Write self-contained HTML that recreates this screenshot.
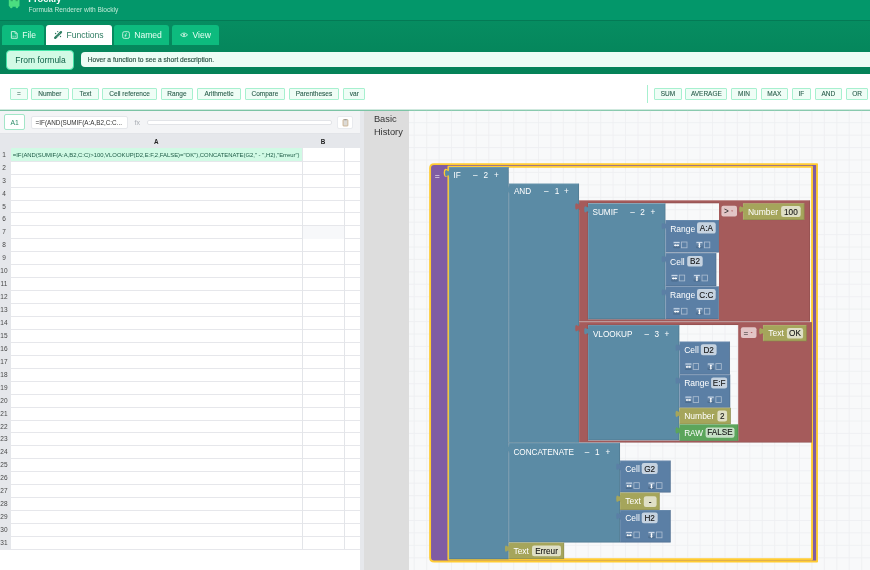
<!DOCTYPE html><html><head><meta charset="utf-8"><style>
*{box-sizing:border-box}
html,body{margin:0;padding:0}
body{width:870px;height:570px;overflow:hidden;position:relative;background:#fff;font-family:"Liberation Sans", sans-serif}
.a{position:absolute;white-space:nowrap}
.tab{position:absolute;top:24.6px;height:20.6px;background:#0dbb7e;border-radius:3px 3px 0 0;color:#e8fff4;font-size:8.6px;line-height:20.6px}
.btn{position:absolute;top:88.2px;height:11.6px;border:1px solid #a7f0cf;background:#effdf6;color:#2a5e4c;font-size:6.5px;line-height:10.9px;-webkit-text-stroke:0.1px #2a5e4c;text-align:center;border-radius:1px}
.rn{position:absolute;left:0;width:7.9px;height:13px;text-align:center;font-size:6.5px;color:#484848;}
</style></head><body><div id="root" style="position:absolute;left:0;top:0;width:870px;height:570px;overflow:hidden;will-change:transform">
<div class="a" style="left:0;top:0;width:870px;height:20px;background:#03976a"></div>
<div class="a" style="left:0;top:19.6px;width:870px;height:1.2px;background:#047a55"></div>
<div class="a" style="left:0;top:20.8px;width:870px;height:53px;background:linear-gradient(#068d61,#048258)"></div>
<svg class="a" style="left:0;top:0" width="30" height="12"><path d="M8.8,-2 H19.5 V5.6 Q19.5,6.8 18.3,6.8 H10 Q8.8,6.8 8.8,5.6 Z" fill="#4ade80"/><circle cx="11.3" cy="7" r="1.3" fill="#4ade80"/><circle cx="16.9" cy="7" r="1.3" fill="#4ade80"/><rect x="10.6" y="0" width="2.2" height="1.2" fill="#2fa866"/><rect x="15.6" y="0" width="2.2" height="1.2" fill="#2fa866"/></svg>
<div class="a" style="left:28.3px;top:-5.3px;font-size:9.3px;font-weight:bold;color:#fff;line-height:9.3px">Frockly</div>
<div class="a" style="left:28.6px;top:5.8px;font-size:6.6px;color:#bfe9d6;line-height:8px">Formula Renderer with Blockly</div>
<div class="tab" style="left:1.8px;width:42.400000000000006px;background:#0dbb7e;color:#e6fff3"></div>
<div class="tab" style="left:46.1px;width:65.6px;background:#ffffff;color:#2e7d62"></div>
<div class="tab" style="left:113.8px;width:55.7px;background:#0dbb7e;color:#e6fff3"></div>
<div class="tab" style="left:171.7px;width:47.10000000000002px;background:#0dbb7e;color:#e6fff3"></div>
<svg class="a" style="left:0;top:24px" width="220" height="22" viewBox="0 24 220 22"><path d="M11.4,31.6 H15.3 L17.2,33.5 V38.3 H11.4 Z" fill="none" stroke="#c9f3df" stroke-width="0.95" stroke-linejoin="round"/><path d="M15.1,31.7 V33.7 H17.1" fill="none" stroke="#c9f3df" stroke-width="0.8"/><path d="M13.1,35.6 v1.6 M15.2,35.6 v1.6" stroke="#c9f3df" stroke-width="0.8"/><path d="M55.2,37.9 L61.0,32.1" stroke="#2e7d62" stroke-width="2.3" stroke-linecap="round"/><path d="M56.3,35.6 l1.2,1.2 M57.6,34.3 l1.2,1.2 M58.9,33.0 l1.2,1.2" stroke="#ffffff" stroke-width="0.45" opacity="0.75"/><circle cx="57.7" cy="31.6" r="0.65" fill="#2e7d62"/><circle cx="55.6" cy="33.5" r="0.7" fill="#2e7d62"/><circle cx="60.5" cy="36.5" r="0.7" fill="#2e7d62"/><rect x="122.7" y="31.7" width="6.7" height="6.7" rx="1.6" fill="none" stroke="#c4f0dc" stroke-width="0.95"/><path d="M126.9,33.6 Q125.9,33.4 125.7,34.6 L125.1,37.2 M124.6,35.3 H126.6" fill="none" stroke="#c4f0dc" stroke-width="0.8"/><path d="M180.5,34.85 Q184.05,31.2 187.6,34.85 Q184.05,38.5 180.5,34.85 Z" fill="none" stroke="#c4f0dc" stroke-width="0.95"/><circle cx="184.05" cy="34.85" r="1.1" fill="#c4f0dc"/></svg>
<div class="a" style="left:22.2px;top:26.5px;font-size:8.6px;line-height:16px;color:#e6fff3">File</div>
<div class="a" style="left:66.4px;top:26.5px;font-size:8.6px;line-height:16px;color:#2e7d62">Functions</div>
<div class="a" style="left:134.2px;top:26.5px;font-size:8.6px;line-height:16px;color:#e6fff3">Named</div>
<div class="a" style="left:192.5px;top:26.5px;font-size:8.6px;line-height:16px;color:#e6fff3">View</div>
<div class="a" style="left:6.2px;top:50.2px;width:68px;height:19.6px;background:#d1fae5;border:1.5px solid #45e3a8;border-radius:4px"></div>
<div class="a" style="left:15.2px;top:53.5px;font-size:8.5px;line-height:12px;color:#0b5e45">From formula</div>
<div class="a" style="left:81.1px;top:51.9px;width:800px;height:15.2px;background:#ecfdf5;border-radius:4px"></div>
<div class="a" style="left:87.8px;top:55.3px;font-size:6.65px;line-height:9px;color:#2a5244;-webkit-text-stroke:0.15px #2a5244">Hover a function to see a short description.</div>
<div class="btn" style="left:9.9px;width:17.9px">=</div>
<div class="btn" style="left:31.2px;width:37.39999999999999px">Number</div>
<div class="btn" style="left:72.2px;width:26.39999999999999px">Text</div>
<div class="btn" style="left:102.4px;width:54.400000000000006px">Cell reference</div>
<div class="btn" style="left:161.2px;width:31.5px">Range</div>
<div class="btn" style="left:197.2px;width:43.5px">Arithmetic</div>
<div class="btn" style="left:245px;width:39.80000000000001px">Compare</div>
<div class="btn" style="left:289.3px;width:49.30000000000001px">Parentheses</div>
<div class="btn" style="left:343.1px;width:22.399999999999977px">var</div>
<div class="btn" style="left:654.2px;width:27.399999999999977px">SUM</div>
<div class="btn" style="left:685.3px;width:42.200000000000045px">AVERAGE</div>
<div class="btn" style="left:731.3px;width:25.5px">MIN</div>
<div class="btn" style="left:760.8px;width:27.200000000000045px">MAX</div>
<div class="btn" style="left:792px;width:18.700000000000045px">IF</div>
<div class="btn" style="left:815.1px;width:26.600000000000023px">AND</div>
<div class="btn" style="left:845.9px;width:22.300000000000068px">OR</div>
<div class="a" style="left:647px;top:84.5px;width:1.2px;height:18.5px;background:#a7f0cf"></div>
<div class="a" style="left:0;top:109px;width:870px;height:1px;background:#cfe9de"></div>
<div class="a" style="left:0;top:110px;width:870px;height:1px;background:#7cc3a5"></div>
<div class="a" style="left:0;top:110.9px;width:359.6px;height:23.1px;background:#f3f4f6;border-bottom:0.6px solid #e2e4e8"></div>
<div class="a" style="left:3.8px;top:114.3px;width:21.7px;height:16px;background:#fff;border:1.1px solid #a3e6c8;border-radius:2px"></div>
<div class="a" style="left:10.4px;top:117.5px;font-size:6.8px;line-height:10px;color:#2b8a68">A1</div>
<div class="a" style="left:31px;top:115.5px;width:97.4px;height:13.5px;background:#fff;border:0.7px solid #e5e7eb;border-radius:2px"></div>
<div class="a" style="left:35.6px;top:118px;font-size:6.34px;line-height:9px;color:#333">=IF(AND(SUMIF(A:A,B2,C:C...</div>
<div class="a" style="left:134.6px;top:117.8px;font-size:7px;line-height:9px;color:#a8acb3">fx</div>
<div class="a" style="left:146.5px;top:120px;width:185px;height:4.8px;background:#fff;border:0.7px solid #e2e4e8;border-radius:2px"></div>
<div class="a" style="left:337.2px;top:115.6px;width:16.2px;height:13.8px;background:#fff;border:0.7px solid #e8eaee;border-radius:2px"></div>
<svg class="a" style="left:340px;top:117px" width="10" height="11" viewBox="340 117 10 11"><rect x="343.0" y="119.6" width="4.9" height="6.4" rx="0.6" fill="#dcdad6" stroke="#c4a77f" stroke-width="0.75"/><rect x="344.3" y="119.0" width="2.3" height="1.2" rx="0.3" fill="#9a9a9a"/></svg>
<div class="a" style="left:0;top:134px;width:359.6px;height:14.4px;background:#e5e7eb"></div>
<div class="a" style="left:154px;top:138.2px;font-size:6.3px;font-weight:bold;line-height:8px;color:#222">A</div>
<div class="a" style="left:320.8px;top:138.2px;font-size:6.3px;font-weight:bold;line-height:8px;color:#222">B</div>
<div class="a" style="left:11px;top:148.4px;width:348.6px;height:401px;background:#fff"></div>
<div class="a" style="left:0;top:148.4px;width:11px;height:401px;background:#e5e7eb"></div>
<div class="a" style="left:0;top:160.74px;width:359.6px;height:1px;background:#e6e7eb"></div>
<div class="rn" style="top:148.80px;line-height:12.94px">1</div>
<div class="a" style="left:0;top:173.68px;width:359.6px;height:1px;background:#e6e7eb"></div>
<div class="rn" style="top:161.74px;line-height:12.94px">2</div>
<div class="a" style="left:0;top:186.62px;width:359.6px;height:1px;background:#e6e7eb"></div>
<div class="rn" style="top:174.68px;line-height:12.94px">3</div>
<div class="a" style="left:0;top:199.55px;width:359.6px;height:1px;background:#e6e7eb"></div>
<div class="rn" style="top:187.62px;line-height:12.94px">4</div>
<div class="a" style="left:0;top:212.49px;width:359.6px;height:1px;background:#e6e7eb"></div>
<div class="rn" style="top:200.55px;line-height:12.94px">5</div>
<div class="a" style="left:0;top:225.43px;width:359.6px;height:1px;background:#e6e7eb"></div>
<div class="rn" style="top:213.49px;line-height:12.94px">6</div>
<div class="a" style="left:0;top:238.37px;width:359.6px;height:1px;background:#e6e7eb"></div>
<div class="rn" style="top:226.43px;line-height:12.94px">7</div>
<div class="a" style="left:0;top:251.31px;width:359.6px;height:1px;background:#e6e7eb"></div>
<div class="rn" style="top:239.37px;line-height:12.94px">8</div>
<div class="a" style="left:0;top:264.25px;width:359.6px;height:1px;background:#e6e7eb"></div>
<div class="rn" style="top:252.31px;line-height:12.94px">9</div>
<div class="a" style="left:0;top:277.19px;width:359.6px;height:1px;background:#e6e7eb"></div>
<div class="rn" style="top:265.25px;line-height:12.94px">10</div>
<div class="a" style="left:0;top:290.13px;width:359.6px;height:1px;background:#e6e7eb"></div>
<div class="rn" style="top:278.19px;line-height:12.94px">11</div>
<div class="a" style="left:0;top:303.06px;width:359.6px;height:1px;background:#e6e7eb"></div>
<div class="rn" style="top:291.13px;line-height:12.94px">12</div>
<div class="a" style="left:0;top:316.00px;width:359.6px;height:1px;background:#e6e7eb"></div>
<div class="rn" style="top:304.06px;line-height:12.94px">13</div>
<div class="a" style="left:0;top:328.94px;width:359.6px;height:1px;background:#e6e7eb"></div>
<div class="rn" style="top:317.00px;line-height:12.94px">14</div>
<div class="a" style="left:0;top:341.88px;width:359.6px;height:1px;background:#e6e7eb"></div>
<div class="rn" style="top:329.94px;line-height:12.94px">15</div>
<div class="a" style="left:0;top:354.82px;width:359.6px;height:1px;background:#e6e7eb"></div>
<div class="rn" style="top:342.88px;line-height:12.94px">16</div>
<div class="a" style="left:0;top:367.76px;width:359.6px;height:1px;background:#e6e7eb"></div>
<div class="rn" style="top:355.82px;line-height:12.94px">17</div>
<div class="a" style="left:0;top:380.70px;width:359.6px;height:1px;background:#e6e7eb"></div>
<div class="rn" style="top:368.76px;line-height:12.94px">18</div>
<div class="a" style="left:0;top:393.64px;width:359.6px;height:1px;background:#e6e7eb"></div>
<div class="rn" style="top:381.70px;line-height:12.94px">19</div>
<div class="a" style="left:0;top:406.57px;width:359.6px;height:1px;background:#e6e7eb"></div>
<div class="rn" style="top:394.64px;line-height:12.94px">20</div>
<div class="a" style="left:0;top:419.51px;width:359.6px;height:1px;background:#e6e7eb"></div>
<div class="rn" style="top:407.57px;line-height:12.94px">21</div>
<div class="a" style="left:0;top:432.45px;width:359.6px;height:1px;background:#e6e7eb"></div>
<div class="rn" style="top:420.51px;line-height:12.94px">22</div>
<div class="a" style="left:0;top:445.39px;width:359.6px;height:1px;background:#e6e7eb"></div>
<div class="rn" style="top:433.45px;line-height:12.94px">23</div>
<div class="a" style="left:0;top:458.33px;width:359.6px;height:1px;background:#e6e7eb"></div>
<div class="rn" style="top:446.39px;line-height:12.94px">24</div>
<div class="a" style="left:0;top:471.27px;width:359.6px;height:1px;background:#e6e7eb"></div>
<div class="rn" style="top:459.33px;line-height:12.94px">25</div>
<div class="a" style="left:0;top:484.21px;width:359.6px;height:1px;background:#e6e7eb"></div>
<div class="rn" style="top:472.27px;line-height:12.94px">26</div>
<div class="a" style="left:0;top:497.15px;width:359.6px;height:1px;background:#e6e7eb"></div>
<div class="rn" style="top:485.21px;line-height:12.94px">27</div>
<div class="a" style="left:0;top:510.08px;width:359.6px;height:1px;background:#e6e7eb"></div>
<div class="rn" style="top:498.15px;line-height:12.94px">28</div>
<div class="a" style="left:0;top:523.02px;width:359.6px;height:1px;background:#e6e7eb"></div>
<div class="rn" style="top:511.08px;line-height:12.94px">29</div>
<div class="a" style="left:0;top:535.96px;width:359.6px;height:1px;background:#e6e7eb"></div>
<div class="rn" style="top:524.02px;line-height:12.94px">30</div>
<div class="a" style="left:0;top:548.90px;width:359.6px;height:1px;background:#e6e7eb"></div>
<div class="rn" style="top:536.96px;line-height:12.94px">31</div>
<div class="a" style="left:302.8px;top:226.03px;width:41.6px;height:12.94px;background:#f7f8fa"></div>
<div class="a" style="left:11px;top:148.4px;width:291.3px;height:12.34px;background:#d1fae5"></div>
<div class="a" style="left:12.8px;top:152px;font-size:5.9px;line-height:7px;color:#1c5a45">=IF(AND(SUMIF(A:A,B2,C:C)&gt;100,VLOOKUP(D2,E:F,2,FALSE)="OK"),CONCATENATE(G2," - ",H2),"Erreur")</div>
<div class="a" style="left:302.3px;top:148.4px;width:0.8px;height:401px;background:#e3e5e9"></div>
<div class="a" style="left:344.4px;top:148.4px;width:0.8px;height:401px;background:#e3e5e9"></div>
<div class="a" style="left:359.6px;top:110.9px;width:4.6px;height:460px;background:#e6e8ec"></div>
<div class="a" style="left:364.2px;top:110.9px;width:44.8px;height:460px;background:#dddddd"></div>
<div class="a" style="left:373.9px;top:114.1px;font-size:9.3px;line-height:10px;color:#333">Basic</div>
<div class="a" style="left:373.9px;top:127.3px;font-size:9.3px;line-height:10px;color:#333">History</div>
<svg class="a" style="left:0;top:0" width="870" height="570" viewBox="0 0 870 570"><defs><linearGradient id="icg" x1="0" y1="0" x2="0" y2="1"><stop offset="0" stop-color="#7e9cbd"/><stop offset="1" stop-color="#48698b"/></linearGradient></defs>
<rect x="409" y="110.9" width="461" height="460" fill="#f8f9fa"/>
<line x1="414.20" y1="110.9" x2="414.20" y2="570" stroke="#eeeff2" stroke-width="0.9"/>
<line x1="426.63" y1="110.9" x2="426.63" y2="570" stroke="#eeeff2" stroke-width="0.9"/>
<line x1="439.06" y1="110.9" x2="439.06" y2="570" stroke="#eeeff2" stroke-width="0.9"/>
<line x1="451.49" y1="110.9" x2="451.49" y2="570" stroke="#eeeff2" stroke-width="0.9"/>
<line x1="463.92" y1="110.9" x2="463.92" y2="570" stroke="#eeeff2" stroke-width="0.9"/>
<line x1="476.35" y1="110.9" x2="476.35" y2="570" stroke="#eeeff2" stroke-width="0.9"/>
<line x1="488.78" y1="110.9" x2="488.78" y2="570" stroke="#eeeff2" stroke-width="0.9"/>
<line x1="501.21" y1="110.9" x2="501.21" y2="570" stroke="#eeeff2" stroke-width="0.9"/>
<line x1="513.64" y1="110.9" x2="513.64" y2="570" stroke="#eeeff2" stroke-width="0.9"/>
<line x1="526.07" y1="110.9" x2="526.07" y2="570" stroke="#eeeff2" stroke-width="0.9"/>
<line x1="538.50" y1="110.9" x2="538.50" y2="570" stroke="#eeeff2" stroke-width="0.9"/>
<line x1="550.93" y1="110.9" x2="550.93" y2="570" stroke="#eeeff2" stroke-width="0.9"/>
<line x1="563.36" y1="110.9" x2="563.36" y2="570" stroke="#eeeff2" stroke-width="0.9"/>
<line x1="575.79" y1="110.9" x2="575.79" y2="570" stroke="#eeeff2" stroke-width="0.9"/>
<line x1="588.22" y1="110.9" x2="588.22" y2="570" stroke="#eeeff2" stroke-width="0.9"/>
<line x1="600.65" y1="110.9" x2="600.65" y2="570" stroke="#eeeff2" stroke-width="0.9"/>
<line x1="613.08" y1="110.9" x2="613.08" y2="570" stroke="#eeeff2" stroke-width="0.9"/>
<line x1="625.51" y1="110.9" x2="625.51" y2="570" stroke="#eeeff2" stroke-width="0.9"/>
<line x1="637.94" y1="110.9" x2="637.94" y2="570" stroke="#eeeff2" stroke-width="0.9"/>
<line x1="650.37" y1="110.9" x2="650.37" y2="570" stroke="#eeeff2" stroke-width="0.9"/>
<line x1="662.80" y1="110.9" x2="662.80" y2="570" stroke="#eeeff2" stroke-width="0.9"/>
<line x1="675.23" y1="110.9" x2="675.23" y2="570" stroke="#eeeff2" stroke-width="0.9"/>
<line x1="687.66" y1="110.9" x2="687.66" y2="570" stroke="#eeeff2" stroke-width="0.9"/>
<line x1="700.09" y1="110.9" x2="700.09" y2="570" stroke="#eeeff2" stroke-width="0.9"/>
<line x1="712.52" y1="110.9" x2="712.52" y2="570" stroke="#eeeff2" stroke-width="0.9"/>
<line x1="724.95" y1="110.9" x2="724.95" y2="570" stroke="#eeeff2" stroke-width="0.9"/>
<line x1="737.38" y1="110.9" x2="737.38" y2="570" stroke="#eeeff2" stroke-width="0.9"/>
<line x1="749.81" y1="110.9" x2="749.81" y2="570" stroke="#eeeff2" stroke-width="0.9"/>
<line x1="762.24" y1="110.9" x2="762.24" y2="570" stroke="#eeeff2" stroke-width="0.9"/>
<line x1="774.67" y1="110.9" x2="774.67" y2="570" stroke="#eeeff2" stroke-width="0.9"/>
<line x1="787.10" y1="110.9" x2="787.10" y2="570" stroke="#eeeff2" stroke-width="0.9"/>
<line x1="799.53" y1="110.9" x2="799.53" y2="570" stroke="#eeeff2" stroke-width="0.9"/>
<line x1="811.96" y1="110.9" x2="811.96" y2="570" stroke="#eeeff2" stroke-width="0.9"/>
<line x1="824.39" y1="110.9" x2="824.39" y2="570" stroke="#eeeff2" stroke-width="0.9"/>
<line x1="836.82" y1="110.9" x2="836.82" y2="570" stroke="#eeeff2" stroke-width="0.9"/>
<line x1="849.25" y1="110.9" x2="849.25" y2="570" stroke="#eeeff2" stroke-width="0.9"/>
<line x1="861.68" y1="110.9" x2="861.68" y2="570" stroke="#eeeff2" stroke-width="0.9"/>
<line x1="409" y1="122.70" x2="870" y2="122.70" stroke="#eeeff2" stroke-width="0.9"/>
<line x1="409" y1="135.13" x2="870" y2="135.13" stroke="#eeeff2" stroke-width="0.9"/>
<line x1="409" y1="147.56" x2="870" y2="147.56" stroke="#eeeff2" stroke-width="0.9"/>
<line x1="409" y1="159.99" x2="870" y2="159.99" stroke="#eeeff2" stroke-width="0.9"/>
<line x1="409" y1="172.42" x2="870" y2="172.42" stroke="#eeeff2" stroke-width="0.9"/>
<line x1="409" y1="184.85" x2="870" y2="184.85" stroke="#eeeff2" stroke-width="0.9"/>
<line x1="409" y1="197.28" x2="870" y2="197.28" stroke="#eeeff2" stroke-width="0.9"/>
<line x1="409" y1="209.71" x2="870" y2="209.71" stroke="#eeeff2" stroke-width="0.9"/>
<line x1="409" y1="222.14" x2="870" y2="222.14" stroke="#eeeff2" stroke-width="0.9"/>
<line x1="409" y1="234.57" x2="870" y2="234.57" stroke="#eeeff2" stroke-width="0.9"/>
<line x1="409" y1="247.00" x2="870" y2="247.00" stroke="#eeeff2" stroke-width="0.9"/>
<line x1="409" y1="259.43" x2="870" y2="259.43" stroke="#eeeff2" stroke-width="0.9"/>
<line x1="409" y1="271.86" x2="870" y2="271.86" stroke="#eeeff2" stroke-width="0.9"/>
<line x1="409" y1="284.29" x2="870" y2="284.29" stroke="#eeeff2" stroke-width="0.9"/>
<line x1="409" y1="296.72" x2="870" y2="296.72" stroke="#eeeff2" stroke-width="0.9"/>
<line x1="409" y1="309.15" x2="870" y2="309.15" stroke="#eeeff2" stroke-width="0.9"/>
<line x1="409" y1="321.58" x2="870" y2="321.58" stroke="#eeeff2" stroke-width="0.9"/>
<line x1="409" y1="334.01" x2="870" y2="334.01" stroke="#eeeff2" stroke-width="0.9"/>
<line x1="409" y1="346.44" x2="870" y2="346.44" stroke="#eeeff2" stroke-width="0.9"/>
<line x1="409" y1="358.87" x2="870" y2="358.87" stroke="#eeeff2" stroke-width="0.9"/>
<line x1="409" y1="371.30" x2="870" y2="371.30" stroke="#eeeff2" stroke-width="0.9"/>
<line x1="409" y1="383.73" x2="870" y2="383.73" stroke="#eeeff2" stroke-width="0.9"/>
<line x1="409" y1="396.16" x2="870" y2="396.16" stroke="#eeeff2" stroke-width="0.9"/>
<line x1="409" y1="408.59" x2="870" y2="408.59" stroke="#eeeff2" stroke-width="0.9"/>
<line x1="409" y1="421.02" x2="870" y2="421.02" stroke="#eeeff2" stroke-width="0.9"/>
<line x1="409" y1="433.45" x2="870" y2="433.45" stroke="#eeeff2" stroke-width="0.9"/>
<line x1="409" y1="445.88" x2="870" y2="445.88" stroke="#eeeff2" stroke-width="0.9"/>
<line x1="409" y1="458.31" x2="870" y2="458.31" stroke="#eeeff2" stroke-width="0.9"/>
<line x1="409" y1="470.74" x2="870" y2="470.74" stroke="#eeeff2" stroke-width="0.9"/>
<line x1="409" y1="483.17" x2="870" y2="483.17" stroke="#eeeff2" stroke-width="0.9"/>
<line x1="409" y1="495.60" x2="870" y2="495.60" stroke="#eeeff2" stroke-width="0.9"/>
<line x1="409" y1="508.03" x2="870" y2="508.03" stroke="#eeeff2" stroke-width="0.9"/>
<line x1="409" y1="520.46" x2="870" y2="520.46" stroke="#eeeff2" stroke-width="0.9"/>
<line x1="409" y1="532.89" x2="870" y2="532.89" stroke="#eeeff2" stroke-width="0.9"/>
<line x1="409" y1="545.32" x2="870" y2="545.32" stroke="#eeeff2" stroke-width="0.9"/>
<line x1="409" y1="557.75" x2="870" y2="557.75" stroke="#eeeff2" stroke-width="0.9"/>
<path d="M434.1,164.1 H817.05 V561.5 H434.1 Q430.1,561.5 430.1,557.5 V168.1 Q430.1,164.1 434.1,164.1 Z M448.4,166.7 V176.35 c0,-4.7 -3.76,3.76 -3.76,-3.525 s3.76,1.175 3.76,-3.525 Z M448.4,166.7 V559.2 H812.05 V166.7 Z" fill="#805ca3" fill-rule="nonzero" stroke="#ffcc33" stroke-width="1.9" stroke-linejoin="round"/>
<text x="434.80" y="178.60" font-size="8.6" fill="#fff" fill-opacity="1">=</text>
<path d="M448.90,167.10 H508.70 V559.20 H448.90 L448.90,176.75 c0,-4.700 -3.760,3.760 -3.760,-3.525 s3.760,1.175 3.760,-3.525 Z" fill="#5b8ba5" fill-rule="evenodd"/><path d="M449.20,559.20 V176.75 M449.20,169.70 V167.40 H508.70" fill="none" stroke="rgba(255,255,255,0.2)" stroke-width="0.6"/><path d="M448.90,558.90 H508.40 V167.10" fill="none" stroke="rgba(0,0,0,0.18)" stroke-width="0.6"/>
<text x="453.40" y="178.30" font-size="8.2" fill="#fff" fill-opacity="1">IF</text>
<text x="473.10" y="178.30" font-size="8.2" fill="#fff" fill-opacity="1">&#8211;</text>
<text x="483.50" y="178.30" font-size="8.2" fill="#fff" fill-opacity="1">2</text>
<text x="493.90" y="178.30" font-size="8.2" fill="#fff" fill-opacity="1">+</text>
<path d="M508.70,183.50 H579.00 V442.80 H508.70 L508.70,193.15 c0,-4.700 -3.760,3.760 -3.760,-3.525 s3.760,1.175 3.760,-3.525 Z" fill="#5b8ba5" fill-rule="evenodd"/><path d="M509.00,442.80 V193.15 M509.00,186.10 V183.80 H579.00" fill="none" stroke="rgba(255,255,255,0.2)" stroke-width="0.6"/><path d="M508.70,442.50 H578.70 V183.50" fill="none" stroke="rgba(0,0,0,0.18)" stroke-width="0.6"/>
<text x="513.90" y="194.40" font-size="8.2" fill="#fff" fill-opacity="1">AND</text>
<text x="544.00" y="194.40" font-size="8.2" fill="#fff" fill-opacity="1">&#8211;</text>
<text x="554.70" y="194.40" font-size="8.2" fill="#fff" fill-opacity="1">1</text>
<text x="564.00" y="194.40" font-size="8.2" fill="#fff" fill-opacity="1">+</text>
<path d="M579.00,200.30 H810.00 V321.60 H579.00 L579.00,209.95 c0,-4.700 -3.760,3.760 -3.760,-3.525 s3.760,1.175 3.760,-3.525 Z M588.00,203.20 V319.20 H719.00 V203.20 Z" fill="#a55b5b" fill-rule="evenodd"/><path d="M579.30,321.60 V209.95 M579.30,202.90 V200.60 H810.00" fill="none" stroke="rgba(255,255,255,0.2)" stroke-width="0.6"/><path d="M579.00,321.30 H809.70 V200.30" fill="none" stroke="rgba(0,0,0,0.18)" stroke-width="0.6"/><path d="M587.70,319.20 V202.90 H719.00" fill="none" stroke="rgba(0,0,0,0.18)" stroke-width="0.6"/>
<path d="M588.00,203.20 H665.40 V319.20 H588.00 L588.00,212.85 c0,-4.700 -3.760,3.760 -3.760,-3.525 s3.760,1.175 3.760,-3.525 Z" fill="#5b8ba5" fill-rule="evenodd"/><path d="M588.30,319.20 V212.85 M588.30,205.80 V203.50 H665.40" fill="none" stroke="rgba(255,255,255,0.2)" stroke-width="0.6"/><path d="M588.00,318.90 H665.10 V203.20" fill="none" stroke="rgba(0,0,0,0.18)" stroke-width="0.6"/>
<text x="592.50" y="214.80" font-size="8.2" fill="#fff" fill-opacity="1">SUMIF</text>
<text x="630.20" y="214.80" font-size="8.2" fill="#fff" fill-opacity="1">&#8211;</text>
<text x="640.30" y="214.80" font-size="8.2" fill="#fff" fill-opacity="1">2</text>
<text x="650.50" y="214.80" font-size="8.2" fill="#fff" fill-opacity="1">+</text>
<path d="M665.40,219.90 H718.90 V252.60 H665.40 L665.40,229.55 c0,-4.700 -3.760,3.760 -3.760,-3.525 s3.760,1.175 3.760,-3.525 Z" fill="#5b7fa5" fill-rule="evenodd"/><path d="M665.70,252.60 V229.55 M665.70,222.50 V220.20 H718.90" fill="none" stroke="rgba(255,255,255,0.2)" stroke-width="0.6"/><path d="M665.40,252.30 H718.60 V219.90" fill="none" stroke="rgba(0,0,0,0.18)" stroke-width="0.6"/>
<text x="670.20" y="231.70" font-size="8.5" fill="#fff" fill-opacity="1">Range</text>
<rect x="697.00" y="222.20" width="18.70" height="11.40" rx="2.2" fill="#c6d3e0"/>
<text x="706.35" y="231.30" font-size="8.2" fill="#141414" stroke="#141414" stroke-width="0.1" text-anchor="middle">A:A</text>
<rect x="673.10" y="241.50" width="7" height="6.8" rx="1.2" fill="url(#icg)"/>
<rect x="673.70" y="242.00" width="5.8" height="0.9" fill="#dbe6f2" opacity="0.9"/>
<path d="M674.40,245.30 h4.4" stroke="#fff" stroke-width="1.1"/><path d="M674.00,245.30 l1.6,-1.3 v2.6z M679.20,245.30 l-1.6,-1.3 v2.6z" fill="#fff"/>
<rect x="681.60" y="242.00" width="5.4" height="5.8" fill="none" stroke="#aebfd2" stroke-width="0.8"/>
<rect x="695.90" y="241.50" width="7" height="6.8" rx="1.2" fill="url(#icg)"/>
<rect x="696.50" y="242.00" width="5.8" height="0.9" fill="#dbe6f2" opacity="0.9"/>
<path d="M699.40,243.70 v3.2" stroke="#fff" stroke-width="1.3"/><path d="M699.40,243.00 l-1.3,1.3 h2.6z M699.40,248.10 l-1.4,-1.5 h2.8z" fill="#fff"/>
<rect x="704.40" y="242.00" width="5.4" height="5.8" fill="none" stroke="#aebfd2" stroke-width="0.8"/>
<path d="M665.40,253.00 H716.30 V286.20 H665.40 L665.40,262.65 c0,-4.700 -3.760,3.760 -3.760,-3.525 s3.760,1.175 3.760,-3.525 Z" fill="#5b7fa5" fill-rule="evenodd"/><path d="M665.70,286.20 V262.65 M665.70,255.60 V253.30 H716.30" fill="none" stroke="rgba(255,255,255,0.2)" stroke-width="0.6"/><path d="M665.40,285.90 H716.00 V253.00" fill="none" stroke="rgba(0,0,0,0.18)" stroke-width="0.6"/>
<text x="670.10" y="264.50" font-size="8.5" fill="#fff" fill-opacity="1">Cell</text>
<rect x="687.20" y="255.90" width="15.50" height="10.70" rx="2.2" fill="#c6d3e0"/>
<text x="694.95" y="264.30" font-size="8.2" fill="#141414" stroke="#141414" stroke-width="0.1" text-anchor="middle">B2</text>
<rect x="671.00" y="274.60" width="7" height="6.8" rx="1.2" fill="url(#icg)"/>
<rect x="671.60" y="275.10" width="5.8" height="0.9" fill="#dbe6f2" opacity="0.9"/>
<path d="M672.30,278.40 h4.4" stroke="#fff" stroke-width="1.1"/><path d="M671.90,278.40 l1.6,-1.3 v2.6z M677.10,278.40 l-1.6,-1.3 v2.6z" fill="#fff"/>
<rect x="679.30" y="275.10" width="5.4" height="5.8" fill="none" stroke="#aebfd2" stroke-width="0.8"/>
<rect x="693.40" y="274.60" width="7" height="6.8" rx="1.2" fill="url(#icg)"/>
<rect x="694.00" y="275.10" width="5.8" height="0.9" fill="#dbe6f2" opacity="0.9"/>
<path d="M696.90,276.80 v3.2" stroke="#fff" stroke-width="1.3"/><path d="M696.90,276.10 l-1.3,1.3 h2.6z M696.90,281.20 l-1.4,-1.5 h2.8z" fill="#fff"/>
<rect x="702.00" y="275.10" width="5.4" height="5.8" fill="none" stroke="#aebfd2" stroke-width="0.8"/>
<path d="M665.40,286.20 H718.80 V319.10 H665.40 L665.40,295.85 c0,-4.700 -3.760,3.760 -3.760,-3.525 s3.760,1.175 3.760,-3.525 Z" fill="#5b7fa5" fill-rule="evenodd"/><path d="M665.70,319.10 V295.85 M665.70,288.80 V286.50 H718.80" fill="none" stroke="rgba(255,255,255,0.2)" stroke-width="0.6"/><path d="M665.40,318.80 H718.50 V286.20" fill="none" stroke="rgba(0,0,0,0.18)" stroke-width="0.6"/>
<text x="670.10" y="297.80" font-size="8.5" fill="#fff" fill-opacity="1">Range</text>
<rect x="697.00" y="289.00" width="18.70" height="10.90" rx="2.2" fill="#c6d3e0"/>
<text x="706.35" y="297.60" font-size="8.2" fill="#141414" stroke="#141414" stroke-width="0.1" text-anchor="middle">C:C</text>
<rect x="673.10" y="307.80" width="7" height="6.8" rx="1.2" fill="url(#icg)"/>
<rect x="673.70" y="308.30" width="5.8" height="0.9" fill="#dbe6f2" opacity="0.9"/>
<path d="M674.40,311.60 h4.4" stroke="#fff" stroke-width="1.1"/><path d="M674.00,311.60 l1.6,-1.3 v2.6z M679.20,311.60 l-1.6,-1.3 v2.6z" fill="#fff"/>
<rect x="681.60" y="308.30" width="5.4" height="5.8" fill="none" stroke="#aebfd2" stroke-width="0.8"/>
<rect x="695.90" y="307.80" width="7" height="6.8" rx="1.2" fill="url(#icg)"/>
<rect x="696.50" y="308.30" width="5.8" height="0.9" fill="#dbe6f2" opacity="0.9"/>
<path d="M699.40,310.00 v3.2" stroke="#fff" stroke-width="1.3"/><path d="M699.40,309.30 l-1.3,1.3 h2.6z M699.40,314.40 l-1.4,-1.5 h2.8z" fill="#fff"/>
<rect x="704.40" y="308.30" width="5.4" height="5.8" fill="none" stroke="#aebfd2" stroke-width="0.8"/>
<rect x="721.40" y="205.70" width="15.60" height="10.80" rx="2" fill="#e2c5c6"/>
<text x="724.00" y="214.20" font-size="8.2" fill="#222">&gt;</text>
<path d="M731.00,210.50 h2.2 l-1.1,1.3z" fill="#b05a5a"/>
<path d="M743.00,203.20 H804.50 V219.90 H743.00 L743.00,212.85 c0,-4.700 -3.760,3.760 -3.760,-3.525 s3.760,1.175 3.760,-3.525 Z" fill="#a5a55b" fill-rule="evenodd"/><path d="M743.30,219.90 V212.85 M743.30,205.80 V203.50 H804.50" fill="none" stroke="rgba(255,255,255,0.2)" stroke-width="0.6"/><path d="M743.00,219.60 H804.20 V203.20" fill="none" stroke="rgba(0,0,0,0.18)" stroke-width="0.6"/>
<text x="747.90" y="214.70" font-size="8.5" fill="#fff" fill-opacity="1">Number</text>
<rect x="781.10" y="206.10" width="19.60" height="10.90" rx="2.2" fill="#dfdfc6"/>
<text x="790.90" y="214.70" font-size="8.2" fill="#141414" stroke="#141414" stroke-width="0.1" text-anchor="middle">100</text>
<path d="M579.00,322.00 H811.80 V442.60 H579.00 L579.00,331.65 c0,-4.700 -3.760,3.760 -3.760,-3.525 s3.760,1.175 3.760,-3.525 Z M588.00,325.00 V440.50 H738.20 V325.00 Z" fill="#a55b5b" fill-rule="evenodd"/><path d="M579.30,442.60 V331.65 M579.30,324.60 V322.30 H811.80" fill="none" stroke="rgba(255,255,255,0.2)" stroke-width="0.6"/><path d="M579.00,442.30 H811.50 V322.00" fill="none" stroke="rgba(0,0,0,0.18)" stroke-width="0.6"/><path d="M587.70,440.50 V324.70 H738.20" fill="none" stroke="rgba(0,0,0,0.18)" stroke-width="0.6"/>
<path d="M588.00,325.00 H679.30 V440.30 H588.00 L588.00,334.65 c0,-4.700 -3.760,3.760 -3.760,-3.525 s3.760,1.175 3.760,-3.525 Z" fill="#5b8ba5" fill-rule="evenodd"/><path d="M588.30,440.30 V334.65 M588.30,327.60 V325.30 H679.30" fill="none" stroke="rgba(255,255,255,0.2)" stroke-width="0.6"/><path d="M588.00,440.00 H679.00 V325.00" fill="none" stroke="rgba(0,0,0,0.18)" stroke-width="0.6"/>
<text x="592.90" y="336.80" font-size="8.2" fill="#fff" fill-opacity="1">VLOOKUP</text>
<text x="644.40" y="336.80" font-size="8.2" fill="#fff" fill-opacity="1">&#8211;</text>
<text x="654.40" y="336.80" font-size="8.2" fill="#fff" fill-opacity="1">3</text>
<text x="664.60" y="336.80" font-size="8.2" fill="#fff" fill-opacity="1">+</text>
<path d="M679.30,341.50 H729.90 V374.60 H679.30 L679.30,351.15 c0,-4.700 -3.760,3.760 -3.760,-3.525 s3.760,1.175 3.760,-3.525 Z" fill="#5b7fa5" fill-rule="evenodd"/><path d="M679.60,374.60 V351.15 M679.60,344.10 V341.80 H729.90" fill="none" stroke="rgba(255,255,255,0.2)" stroke-width="0.6"/><path d="M679.30,374.30 H729.60 V341.50" fill="none" stroke="rgba(0,0,0,0.18)" stroke-width="0.6"/>
<text x="684.20" y="352.90" font-size="8.5" fill="#fff" fill-opacity="1">Cell</text>
<rect x="700.80" y="344.30" width="15.80" height="11.00" rx="2.2" fill="#c6d3e0"/>
<text x="708.70" y="353.00" font-size="8.2" fill="#141414" stroke="#141414" stroke-width="0.1" text-anchor="middle">D2</text>
<rect x="684.90" y="363.10" width="7" height="6.8" rx="1.2" fill="url(#icg)"/>
<rect x="685.50" y="363.60" width="5.8" height="0.9" fill="#dbe6f2" opacity="0.9"/>
<path d="M686.20,366.90 h4.4" stroke="#fff" stroke-width="1.1"/><path d="M685.80,366.90 l1.6,-1.3 v2.6z M691.00,366.90 l-1.6,-1.3 v2.6z" fill="#fff"/>
<rect x="693.20" y="363.60" width="5.4" height="5.8" fill="none" stroke="#aebfd2" stroke-width="0.8"/>
<rect x="707.30" y="363.10" width="7" height="6.8" rx="1.2" fill="url(#icg)"/>
<rect x="707.90" y="363.60" width="5.8" height="0.9" fill="#dbe6f2" opacity="0.9"/>
<path d="M710.80,365.30 v3.2" stroke="#fff" stroke-width="1.3"/><path d="M710.80,364.60 l-1.3,1.3 h2.6z M710.80,369.70 l-1.4,-1.5 h2.8z" fill="#fff"/>
<rect x="715.90" y="363.60" width="5.4" height="5.8" fill="none" stroke="#aebfd2" stroke-width="0.8"/>
<path d="M679.30,374.60 H730.20 V407.70 H679.30 L679.30,384.25 c0,-4.700 -3.760,3.760 -3.760,-3.525 s3.760,1.175 3.760,-3.525 Z" fill="#5b7fa5" fill-rule="evenodd"/><path d="M679.60,407.70 V384.25 M679.60,377.20 V374.90 H730.20" fill="none" stroke="rgba(255,255,255,0.2)" stroke-width="0.6"/><path d="M679.30,407.40 H729.90 V374.60" fill="none" stroke="rgba(0,0,0,0.18)" stroke-width="0.6"/>
<text x="684.20" y="386.00" font-size="8.5" fill="#fff" fill-opacity="1">Range</text>
<rect x="711.10" y="377.40" width="16.00" height="11.00" rx="2.2" fill="#c6d3e0"/>
<text x="719.10" y="386.10" font-size="8.2" fill="#141414" stroke="#141414" stroke-width="0.1" text-anchor="middle">E:F</text>
<rect x="684.90" y="396.20" width="7" height="6.8" rx="1.2" fill="url(#icg)"/>
<rect x="685.50" y="396.70" width="5.8" height="0.9" fill="#dbe6f2" opacity="0.9"/>
<path d="M686.20,400.00 h4.4" stroke="#fff" stroke-width="1.1"/><path d="M685.80,400.00 l1.6,-1.3 v2.6z M691.00,400.00 l-1.6,-1.3 v2.6z" fill="#fff"/>
<rect x="693.20" y="396.70" width="5.4" height="5.8" fill="none" stroke="#aebfd2" stroke-width="0.8"/>
<rect x="707.30" y="396.20" width="7" height="6.8" rx="1.2" fill="url(#icg)"/>
<rect x="707.90" y="396.70" width="5.8" height="0.9" fill="#dbe6f2" opacity="0.9"/>
<path d="M710.80,398.40 v3.2" stroke="#fff" stroke-width="1.3"/><path d="M710.80,397.70 l-1.3,1.3 h2.6z M710.80,402.80 l-1.4,-1.5 h2.8z" fill="#fff"/>
<rect x="715.90" y="396.70" width="5.4" height="5.8" fill="none" stroke="#aebfd2" stroke-width="0.8"/>
<path d="M679.30,407.70 H730.80 V424.30 H679.30 L679.30,417.35 c0,-4.700 -3.760,3.760 -3.760,-3.525 s3.760,1.175 3.760,-3.525 Z" fill="#a5a55b" fill-rule="evenodd"/><path d="M679.60,424.30 V417.35 M679.60,410.30 V408.00 H730.80" fill="none" stroke="rgba(255,255,255,0.2)" stroke-width="0.6"/><path d="M679.30,424.00 H730.50 V407.70" fill="none" stroke="rgba(0,0,0,0.18)" stroke-width="0.6"/>
<text x="684.20" y="419.10" font-size="8.5" fill="#fff" fill-opacity="1">Number</text>
<rect x="717.40" y="410.60" width="9.70" height="10.90" rx="2.2" fill="#dfdfc6"/>
<text x="722.25" y="419.20" font-size="8.2" fill="#141414" stroke="#141414" stroke-width="0.1" text-anchor="middle">2</text>
<path d="M679.30,424.30 H738.20 V440.80 H679.30 L679.30,433.95 c0,-4.700 -3.760,3.760 -3.760,-3.525 s3.760,1.175 3.760,-3.525 Z" fill="#5ba55b" fill-rule="evenodd"/><path d="M679.60,440.80 V433.95 M679.60,426.90 V424.60 H738.20" fill="none" stroke="rgba(255,255,255,0.2)" stroke-width="0.6"/><path d="M679.30,440.50 H737.90 V424.30" fill="none" stroke="rgba(0,0,0,0.18)" stroke-width="0.6"/>
<text x="684.20" y="435.70" font-size="8.2" fill="#fff" fill-opacity="1">RAW</text>
<rect x="705.60" y="427.40" width="28.90" height="10.30" rx="2.2" fill="#c6dfc6"/>
<text x="720.05" y="435.40" font-size="8.2" fill="#141414" stroke="#141414" stroke-width="0.1" text-anchor="middle">FALSE</text>
<rect x="740.90" y="327.20" width="15.60" height="10.70" rx="2" fill="#e2c5c6"/>
<text x="743.50" y="335.60" font-size="8.2" fill="#222">=</text>
<path d="M750.50,331.95 h2.2 l-1.1,1.3z" fill="#b05a5a"/>
<path d="M763.00,325.00 H806.70 V341.30 H763.00 L763.00,334.65 c0,-4.700 -3.760,3.760 -3.760,-3.525 s3.760,1.175 3.760,-3.525 Z" fill="#a5a55b" fill-rule="evenodd"/><path d="M763.30,341.30 V334.65 M763.30,327.60 V325.30 H806.70" fill="none" stroke="rgba(255,255,255,0.2)" stroke-width="0.6"/><path d="M763.00,341.00 H806.40 V325.00" fill="none" stroke="rgba(0,0,0,0.18)" stroke-width="0.6"/>
<text x="768.30" y="336.40" font-size="8.5" fill="#fff" fill-opacity="1">Text</text>
<rect x="786.90" y="328.10" width="16.20" height="10.50" rx="2.2" fill="#dfdfc6"/>
<text x="795.00" y="336.30" font-size="8.2" fill="#141414" stroke="#141414" stroke-width="0.1" text-anchor="middle">OK</text>
<path d="M508.70,442.80 H620.00 V542.40 H508.70 L508.70,452.45 c0,-4.700 -3.760,3.760 -3.760,-3.525 s3.760,1.175 3.760,-3.525 Z" fill="#5b8ba5" fill-rule="evenodd"/><path d="M509.00,542.40 V452.45 M509.00,445.40 V443.10 H620.00" fill="none" stroke="rgba(255,255,255,0.2)" stroke-width="0.6"/><path d="M508.70,542.10 H619.70 V442.80" fill="none" stroke="rgba(0,0,0,0.18)" stroke-width="0.6"/>
<text x="513.40" y="454.80" font-size="8.2" fill="#fff" fill-opacity="1">CONCATENATE</text>
<text x="584.70" y="454.80" font-size="8.2" fill="#fff" fill-opacity="1">&#8211;</text>
<text x="595.10" y="454.80" font-size="8.2" fill="#fff" fill-opacity="1">1</text>
<text x="605.50" y="454.80" font-size="8.2" fill="#fff" fill-opacity="1">+</text>
<path d="M620.00,460.60 H670.70 V492.50 H620.00 L620.00,470.25 c0,-4.700 -3.760,3.760 -3.760,-3.525 s3.760,1.175 3.760,-3.525 Z" fill="#5b7fa5" fill-rule="evenodd"/><path d="M620.30,492.50 V470.25 M620.30,463.20 V460.90 H670.70" fill="none" stroke="rgba(255,255,255,0.2)" stroke-width="0.6"/><path d="M620.00,492.20 H670.40 V460.60" fill="none" stroke="rgba(0,0,0,0.18)" stroke-width="0.6"/>
<text x="625.20" y="472.00" font-size="8.5" fill="#fff" fill-opacity="1">Cell</text>
<rect x="641.70" y="463.10" width="16.00" height="10.80" rx="2.2" fill="#c6d3e0"/>
<text x="649.70" y="471.60" font-size="8.2" fill="#141414" stroke="#141414" stroke-width="0.1" text-anchor="middle">G2</text>
<rect x="625.60" y="482.20" width="7" height="6.8" rx="1.2" fill="url(#icg)"/>
<rect x="626.20" y="482.70" width="5.8" height="0.9" fill="#dbe6f2" opacity="0.9"/>
<path d="M626.90,486.00 h4.4" stroke="#fff" stroke-width="1.1"/><path d="M626.50,486.00 l1.6,-1.3 v2.6z M631.70,486.00 l-1.6,-1.3 v2.6z" fill="#fff"/>
<rect x="633.90" y="482.70" width="5.4" height="5.8" fill="none" stroke="#aebfd2" stroke-width="0.8"/>
<rect x="648.00" y="482.20" width="7" height="6.8" rx="1.2" fill="url(#icg)"/>
<rect x="648.60" y="482.70" width="5.8" height="0.9" fill="#dbe6f2" opacity="0.9"/>
<path d="M651.50,484.40 v3.2" stroke="#fff" stroke-width="1.3"/><path d="M651.50,483.70 l-1.3,1.3 h2.6z M651.50,488.80 l-1.4,-1.5 h2.8z" fill="#fff"/>
<rect x="656.60" y="482.70" width="5.4" height="5.8" fill="none" stroke="#aebfd2" stroke-width="0.8"/>
<path d="M620.00,492.50 H659.70 V509.90 H620.00 L620.00,502.15 c0,-4.700 -3.760,3.760 -3.760,-3.525 s3.760,1.175 3.760,-3.525 Z" fill="#a5a55b" fill-rule="evenodd"/><path d="M620.30,509.90 V502.15 M620.30,495.10 V492.80 H659.70" fill="none" stroke="rgba(255,255,255,0.2)" stroke-width="0.6"/><path d="M620.00,509.60 H659.40 V492.50" fill="none" stroke="rgba(0,0,0,0.18)" stroke-width="0.6"/>
<text x="625.20" y="503.90" font-size="8.5" fill="#fff" fill-opacity="1">Text</text>
<rect x="643.80" y="496.20" width="12.80" height="10.80" rx="2.2" fill="#dfdfc6"/>
<text x="650.20" y="504.70" font-size="8.2" fill="#141414" stroke="#141414" stroke-width="0.1" text-anchor="middle">-</text>
<path d="M620.00,509.90 H670.70 V542.40 H620.00 L620.00,519.55 c0,-4.700 -3.760,3.760 -3.760,-3.525 s3.760,1.175 3.760,-3.525 Z" fill="#5b7fa5" fill-rule="evenodd"/><path d="M620.30,542.40 V519.55 M620.30,512.50 V510.20 H670.70" fill="none" stroke="rgba(255,255,255,0.2)" stroke-width="0.6"/><path d="M620.00,542.10 H670.40 V509.90" fill="none" stroke="rgba(0,0,0,0.18)" stroke-width="0.6"/>
<text x="625.20" y="521.30" font-size="8.5" fill="#fff" fill-opacity="1">Cell</text>
<rect x="641.70" y="512.40" width="16.00" height="10.80" rx="2.2" fill="#c6d3e0"/>
<text x="649.70" y="520.90" font-size="8.2" fill="#141414" stroke="#141414" stroke-width="0.1" text-anchor="middle">H2</text>
<rect x="625.60" y="531.50" width="7" height="6.8" rx="1.2" fill="url(#icg)"/>
<rect x="626.20" y="532.00" width="5.8" height="0.9" fill="#dbe6f2" opacity="0.9"/>
<path d="M626.90,535.30 h4.4" stroke="#fff" stroke-width="1.1"/><path d="M626.50,535.30 l1.6,-1.3 v2.6z M631.70,535.30 l-1.6,-1.3 v2.6z" fill="#fff"/>
<rect x="633.90" y="532.00" width="5.4" height="5.8" fill="none" stroke="#aebfd2" stroke-width="0.8"/>
<rect x="648.00" y="531.50" width="7" height="6.8" rx="1.2" fill="url(#icg)"/>
<rect x="648.60" y="532.00" width="5.8" height="0.9" fill="#dbe6f2" opacity="0.9"/>
<path d="M651.50,533.70 v3.2" stroke="#fff" stroke-width="1.3"/><path d="M651.50,533.00 l-1.3,1.3 h2.6z M651.50,538.10 l-1.4,-1.5 h2.8z" fill="#fff"/>
<rect x="656.60" y="532.00" width="5.4" height="5.8" fill="none" stroke="#aebfd2" stroke-width="0.8"/>
<path d="M508.70,542.40 H564.10 V559.00 H508.70 L508.70,552.05 c0,-4.700 -3.760,3.760 -3.760,-3.525 s3.760,1.175 3.760,-3.525 Z" fill="#a5a55b" fill-rule="evenodd"/><path d="M509.00,559.00 V552.05 M509.00,545.00 V542.70 H564.10" fill="none" stroke="rgba(255,255,255,0.2)" stroke-width="0.6"/><path d="M508.70,558.70 H563.80 V542.40" fill="none" stroke="rgba(0,0,0,0.18)" stroke-width="0.6"/>
<text x="513.40" y="553.90" font-size="8.5" fill="#fff" fill-opacity="1">Text</text>
<rect x="532.00" y="545.50" width="29.00" height="10.80" rx="2.2" fill="#dfdfc6"/>
<text x="546.50" y="554.00" font-size="8.2" fill="#141414" stroke="#141414" stroke-width="0.1" text-anchor="middle">Erreur</text></svg>
</div></body></html>
